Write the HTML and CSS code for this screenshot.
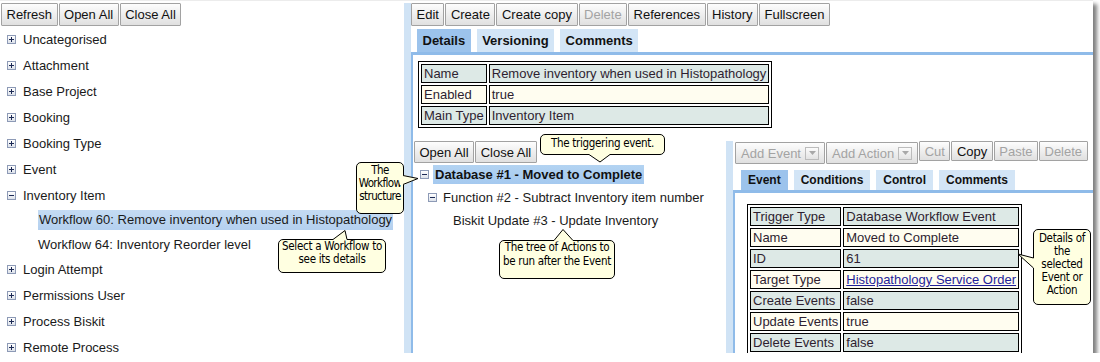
FILE: index.html
```html
<!DOCTYPE html>
<html>
<head>
<meta charset="utf-8">
<title>Workflows</title>
<link rel="stylesheet" href="styles.css">
</head>
<body>
<div class="window">
  <div class="left">
    <div class="toolbar">
      <button class="btn">Refresh</button>
      <button class="btn">Open All</button>
      <button class="btn">Close All</button>
    </div>
    <ul class="tree">
      <li class="node"><span class="tog plus"></span>Uncategorised</li>
      <li class="node"><span class="tog plus"></span>Attachment</li>
      <li class="node"><span class="tog plus"></span>Base Project</li>
      <li class="node"><span class="tog plus"></span>Booking</li>
      <li class="node"><span class="tog plus"></span>Booking Type</li>
      <li class="node"><span class="tog plus"></span>Event</li>
      <li class="node"><span class="tog"></span>Inventory Item</li>
      <li class="child"><span class="sel">Workflow 60: Remove inventory when used in Histopathology</span></li>
      <li class="child">Workflow 64: Inventory Reorder level</li>
      <li class="node"><span class="tog plus"></span>Login Attempt</li>
      <li class="node"><span class="tog plus"></span>Permissions User</li>
      <li class="node"><span class="tog plus"></span>Process Biskit</li>
      <li class="node"><span class="tog plus"></span>Remote Process</li>
    </ul>
  </div>

  <div class="main">
    <div class="toolbar">
      <button class="btn">Edit</button>
      <button class="btn">Create</button>
      <button class="btn">Create copy</button>
      <button class="btn disabled">Delete</button>
      <button class="btn">References</button>
      <button class="btn">History</button>
      <button class="btn">Fullscreen</button>
    </div>
    <div class="tabs">
      <span class="tab active">Details</span>
      <span class="tab">Versioning</span>
      <span class="tab">Comments</span>
    </div>
    <div class="tabpanel">
      <table class="props props-main">
        <tr class="a"><td>Name</td><td>Remove inventory when used in Histopathology</td></tr>
        <tr class="b"><td>Enabled</td><td>true</td></tr>
        <tr class="a"><td>Main Type</td><td>Inventory Item</td></tr>
      </table>

      <div class="lower">
        <div class="wtree">
          <div class="toolbar small">
            <button class="btn">Open All</button>
            <button class="btn">Close All</button>
          </div>
          <div class="trow lvl0"><span class="tog"></span><span class="hl">Database #1 - Moved to Complete</span></div>
          <div class="trow lvl1"><span class="tog"></span>Function #2 - Subtract Inventory item number</div>
          <div class="trow lvl2">Biskit Update #3 - Update Inventory</div>
        </div>

        <div class="detail">
          <div class="toolbar dtools">
            <button class="btn disabled drop">Add Event<span class="dd"><svg width="7" height="4" viewBox="0 0 7 4"><path d="M0 0H7L3.5 4Z" fill="#a8a8a8"/></svg></span></button>
            <button class="btn disabled drop">Add Action<span class="dd"><svg width="7" height="4" viewBox="0 0 7 4"><path d="M0 0H7L3.5 4Z" fill="#a8a8a8"/></svg></span></button>
            <button class="btn disabled short">Cut</button>
            <button class="btn short">Copy</button>
            <button class="btn disabled short">Paste</button>
            <button class="btn disabled short">Delete</button>
          </div>
          <div class="tabs dtabs">
            <span class="tab active">Event</span>
            <span class="tab">Conditions</span>
            <span class="tab">Control</span>
            <span class="tab">Comments</span>
          </div>
          <div class="tabpanel dpanel">
            <table class="props props-detail">
              <tr class="a"><td>Trigger Type</td><td>Database Workflow Event</td></tr>
              <tr class="b"><td>Name</td><td>Moved to Complete</td></tr>
              <tr class="a"><td>ID</td><td>61</td></tr>
              <tr class="b"><td>Target Type</td><td><a class="link" href="#">Histopathology Service Order</a></td></tr>
              <tr class="a"><td>Create Events</td><td>false</td></tr>
              <tr class="b"><td>Update Events</td><td>true</td></tr>
              <tr class="a"><td>Delete Events</td><td>false</td></tr>
            </table>
          </div>
        </div>
      </div>
    </div>
  </div>

  <div class="callout c1">The<br>Workflow<br>structure</div>
  <svg class="tail t1" width="22" height="16" viewBox="0 0 22 16"><polygon points="2,3 6,3 20,6.5 6,13 2,13" fill="#ffffe1"/><polyline points="5,3.5 20,6.5 5,12.5" fill="none" stroke="#000" stroke-width="1"/></svg>

  <div class="callout c2">Select a Workflow to<br>see its details</div>
  <svg class="tail t2" width="24" height="16" viewBox="0 0 24 16"><polygon points="5,12.5 5,11 17,2 19,11 19,12.5" fill="#ffffe1"/><polyline points="5,11.5 17,2.5 19,11.5" fill="none" stroke="#000" stroke-width="1"/></svg>

  <div class="callout c3">The triggering event.</div>
  <svg class="tail t3" width="30" height="12" viewBox="0 0 30 12"><polygon points="4,1.5 4,3 15,10 25,3 25,1.5" fill="#ffffe1"/><polyline points="4,2.5 15,10 25,2.5" fill="none" stroke="#000" stroke-width="1"/></svg>

  <div class="callout c4">The tree of Actions to<br>be run after the Event</div>
  <svg class="tail t4" width="28" height="16" viewBox="0 0 28 16"><polygon points="4,14.5 4,13 13,2 23,13 23,14.5" fill="#ffffe1"/><polyline points="4,13.5 13,2.5 23,13.5" fill="none" stroke="#000" stroke-width="1"/></svg>

  <div class="callout c5">Details of<br>the<br>selected<br>Event or<br>Action</div>
  <svg class="tail t5" width="20" height="22" viewBox="0 0 20 22"><polygon points="18.5,8 17,8 2,4 17,18 18.5,18" fill="#ffffe1"/><polyline points="17.5,8 2,4 17.5,18" fill="none" stroke="#000" stroke-width="1"/></svg>
</div>
</body>
</html>
```

FILE: styles.css
```css
html, body {
  margin: 0;
  padding: 0;
  background: #ffffff;
}

body {
  font-family: "Liberation Sans", Arial, sans-serif;
  font-size: 13px;
  color: #1a1a1a;
}

.window {
  position: relative;
  width: 1093px;
  height: 353px;
  box-sizing: border-box;
  padding-top: 3px;
  display: flex;
  background: #ffffff;
  overflow: hidden;
  box-shadow: inset 0 1px 0 #ececec, 4px 4px 4px rgba(0, 0, 0, 0.5);
}

/* ---------- buttons ---------- */
.toolbar {
  display: flex;
  gap: 1px;
  height: 23px;
}

.btn {
  margin: 0;
  height: 23px;
  padding: 0 4.5px;
  display: inline-flex;
  align-items: center;
  box-sizing: border-box;
  border: 1px solid #a2a2a2;
  border-radius: 1px;
  background: linear-gradient(#fdfdfd, #e0e0e0);
  font-family: "Liberation Sans", Arial, sans-serif;
  font-size: 13px;
  color: #111;
  white-space: nowrap;
}

.btn.disabled {
  color: #a3a3a3;
}

/* ---------- left tree ---------- */
.left {
  width: 404px;
  flex: none;
  padding-left: 1px;
  box-sizing: border-box;
}

.tree {
  list-style: none;
  margin: 0;
  padding: 0;
}

.node {
  height: 26px;
  display: flex;
  align-items: center;
  padding-left: 6px;
}

.node .tog {
  margin-right: 7px;
}

.child {
  height: 24px;
  display: flex;
  align-items: center;
  padding-left: 37px;
}

.sel {
  background: linear-gradient(#c4dbf3, #b4d0ef);
  line-height: 20px;
  padding: 0 1px;
}

.tog {
  position: relative;
  flex: none;
  width: 9px;
  height: 9px;
  box-sizing: border-box;
  border: 1px solid #8d9ab6;
  background: linear-gradient(#ffffff, #dde2ea);
}

.tog::before {
  content: "";
  position: absolute;
  left: 1px;
  right: 1px;
  top: 3px;
  height: 1px;
  background: #1c2a55;
}

.tog.plus::after {
  content: "";
  position: absolute;
  top: 1px;
  bottom: 1px;
  left: 3px;
  width: 1px;
  background: #1c2a55;
}

/* ---------- main panel ---------- */
.main {
  flex: 1;
  display: flex;
  flex-direction: column;
  border-left: 7px solid #d0e3f5;
  min-width: 0;
}

.tabs {
  display: flex;
  gap: 6px;
  padding-left: 6px;
  margin-top: 3px;
  height: 23px;
}

.tab {
  padding: 0 5.5px;
  line-height: 23px;
  font-weight: bold;
  color: #111;
  background: #d3e5f6;
}

.tab.active {
  background: #9cc3ec;
}

.tabpanel {
  flex: 1;
  border-top: 3px solid #8fbbe9;
  border-left: 2px solid #8fbbe9;
  display: flex;
  flex-direction: column;
}

.props {
  border-collapse: separate;
  border-spacing: 2px;
  border: 1px solid #000;
  background: #ffffff;
}

.props td {
  border: 1px solid #000;
  padding: 0 2px;
  line-height: 17px;
  white-space: nowrap;
  color: #2e1e30;
}

.props tr.a td {
  background: #dde9e6;
}

.props tr.b td {
  background: #fffdf0;
}

.props-main {
  margin: 6px 0 0 5px;
  align-self: flex-start;
}

.lower {
  flex: 1;
  display: flex;
  margin-top: 13px;
}

/* ---------- workflow tree ---------- */
.wtree {
  width: 313px;
  flex: none;
}

.toolbar.small {
  height: 22px;
  padding-left: 1px;
}

.toolbar.small .btn {
  height: 22px;
}

.trow {
  height: 23px;
  display: flex;
  align-items: center;
}

.lvl0 {
  padding-left: 7px;
}

.lvl0 .tog {
  margin-right: 4px;
}

.hl {
  font-weight: bold;
  color: #111;
  background: linear-gradient(#b3d3f2, #a4c9ef);
  line-height: 19px;
  padding: 0 2px;
}

.lvl1 {
  padding-left: 15px;
}

.lvl1 .tog {
  margin-right: 6px;
}

.lvl2 {
  padding-left: 40px;
}

/* ---------- event detail ---------- */
.detail {
  flex: 1;
  display: flex;
  flex-direction: column;
  border-left: 7px solid #d0e3f5;
}

.dtools {
  align-items: flex-start;
  padding-left: 2px;
  height: 23px;
}

.btn.drop {
  height: 22px;
  margin-top: 1px;
  padding: 0 5px;
}

.btn.short {
  height: 20px;
}

.dd {
  display: inline-flex;
  align-items: center;
  justify-content: center;
  width: 14px;
  height: 13px;
  margin-left: 4px;
  box-sizing: border-box;
  border: 1px solid #bcbcbc;
  background: linear-gradient(#fbfbfb, #e3e3e3);
}

.dtabs {
  margin-top: 6px;
  padding-left: 8px;
  height: 20px;
}

.dtabs .tab {
  font-size: 12px;
  line-height: 20px;
  padding: 0 7px;
}

.props-detail {
  margin: 11px 0 0 12px;
  align-self: flex-start;
}

.link {
  color: #1f1f99;
  text-decoration: underline;
}

/* ---------- callouts ---------- */
.callout {
  position: absolute;
  box-sizing: border-box;
  background: #ffffe1;
  border: 1px solid #000;
  border-radius: 5px;
  font-family: "DejaVu Sans Condensed", "Liberation Sans", sans-serif;
  font-size: 11.5px;
  letter-spacing: -0.3px;
  line-height: 13px;
  text-align: center;
  color: #000;
  white-space: nowrap;
}

.tail {
  position: absolute;
  overflow: visible;
}

.c1 { left: 356px; top: 162px; width: 48px; height: 52px; padding-top: 1px; letter-spacing: -0.6px; }
.t1 { left: 398px; top: 172px; }

.c2 { left: 278px; top: 239px; width: 108px; height: 34px; }
.t2 { left: 328px; top: 228px; }

.c3 { left: 540px; top: 134px; width: 125px; height: 21px; padding-top: 2px; }
.t3 { left: 585px; top: 152px; }

.c4 { left: 499px; top: 240px; width: 116px; height: 39px; padding-top: 0; line-height: 13.5px; }
.t4 { left: 550px; top: 227px; }

.c5 { left: 1033px; top: 229px; width: 58px; height: 76px; padding-top: 2px; }
.t5 { left: 1016px; top: 250px; }
```
